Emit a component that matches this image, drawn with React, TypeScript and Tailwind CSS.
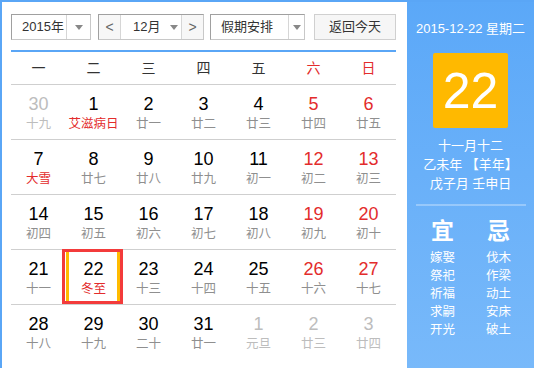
import React from "react";

type Day = { d: number; lunar: string; muted?: boolean; fest?: boolean };

const weeks: Day[][] = [
  [
    { d: 30, lunar: "十九", muted: true },
    { d: 1, lunar: "艾滋病日", fest: true },
    { d: 2, lunar: "廿一" },
    { d: 3, lunar: "廿二" },
    { d: 4, lunar: "廿三" },
    { d: 5, lunar: "廿四" },
    { d: 6, lunar: "廿五" },
  ],
  [
    { d: 7, lunar: "大雪", fest: true },
    { d: 8, lunar: "廿七" },
    { d: 9, lunar: "廿八" },
    { d: 10, lunar: "廿九" },
    { d: 11, lunar: "初一" },
    { d: 12, lunar: "初二" },
    { d: 13, lunar: "初三" },
  ],
  [
    { d: 14, lunar: "初四" },
    { d: 15, lunar: "初五" },
    { d: 16, lunar: "初六" },
    { d: 17, lunar: "初七" },
    { d: 18, lunar: "初八" },
    { d: 19, lunar: "初九" },
    { d: 20, lunar: "初十" },
  ],
  [
    { d: 21, lunar: "十一" },
    { d: 22, lunar: "冬至", fest: true },
    { d: 23, lunar: "十三" },
    { d: 24, lunar: "十四" },
    { d: 25, lunar: "十五" },
    { d: 26, lunar: "十六" },
    { d: 27, lunar: "十七" },
  ],
  [
    { d: 28, lunar: "十八" },
    { d: 29, lunar: "十九" },
    { d: 30, lunar: "二十" },
    { d: 31, lunar: "廿一" },
    { d: 1, lunar: "元旦", muted: true },
    { d: 2, lunar: "廿三", muted: true },
    { d: 3, lunar: "廿四", muted: true },
  ],
];

const weekdays = ["一", "二", "三", "四", "五", "六", "日"];
const yi = ["嫁娶", "祭祀", "祈福", "求嗣", "开光"];
const ji = ["伐木", "作梁", "动土", "安床", "破土"];

const font = "font-['Liberation_Sans','Noto_Sans_CJK_SC',sans-serif]";

function Caret() {
  return <span className="block w-0 h-0 border-x-[4px] border-x-transparent border-t-[5px] border-t-[#888]" />;
}

export default function App() {
  return (
    <div className={`w-[534px] h-[368px] overflow-hidden bg-white flex border-l-2 border-t-2 border-[#5aa6f6] ${font}`}>
      {/* Calendar */}
      <div className="w-[405px] shrink-0 pl-[9px] pt-3">
        {/* Controls */}
        <div className="flex items-center h-[26px] text-[13px] text-[#333]">
          <div className="flex h-full w-[80px] border border-[#c8c8c8] border-t-[#a0a0a0] border-l-[#a0a0a0]">
            <span className="flex-1 flex items-center pl-[10px]">2015年</span>
            <span className="w-[24px] border-l border-[#d6d6d6] flex items-center justify-center"><Caret /></span>
          </div>
          <div className="flex h-full w-[106px] ml-[7px] border border-[#c8c8c8] border-t-[#a0a0a0] border-l-[#a0a0a0]">
            <span className="w-[22px] border-r border-[#d6d6d6] bg-[#f7f7f7] flex items-center justify-center text-[#666] text-[14px]">&lt;</span>
            <span className="flex-1 flex items-center pl-[12px] gap-[10px]">12月<Caret /></span>
            <span className="w-[22px] border-l border-[#d6d6d6] bg-[#f7f7f7] flex items-center justify-center text-[#666] text-[14px]">&gt;</span>
          </div>
          <div className="flex h-full w-[95px] ml-[6px] border border-[#c8c8c8] border-t-[#a0a0a0] border-l-[#a0a0a0]">
            <span className="flex-1 flex items-center pl-[10px]">假期安排</span>
            <span className="w-[16px] border-l border-[#d6d6d6] flex items-center justify-center"><Caret /></span>
          </div>
          <button className="h-full w-[82px] ml-[9px] border border-[#d0d0d0] bg-[#f6f6f6] text-[13px] text-[#333]">返回今天</button>
        </div>

        <div className="w-[385px] mt-[10px] border-t-2 border-[#5aa6f6]" />

        {/* Weekday header */}
        <div className="w-[385px] grid grid-cols-7 h-[33px] items-center border-b border-[#cfcfcf] text-[14px]">
          {weekdays.map((w, i) => (
            <span key={w} className={`text-center ${i >= 5 ? "text-[#e32c2c]" : "text-[#333]"}`}>{w}</span>
          ))}
        </div>

        {/* Days */}
        {weeks.map((week, r) => (
          <div key={r} className={`w-[385px] grid grid-cols-7 h-[55px] ${r < 4 ? "border-b border-[#cfcfcf]" : ""}`}>
            {week.map((day, c) => {
              const today = r === 3 && c === 1;
              const weekend = c >= 5;
              const numColor = day.muted ? "text-[#bdbdbd]" : weekend ? "text-[#e32c2c]" : "text-black";
              const lunarColor = day.muted ? "text-[#bdbdbd]" : day.fest ? "text-[#e32c2c]" : "text-[#8f8f8f]";
              return (
                <div key={c} className="relative flex flex-col items-center pt-[8px]">
                  {today && (
                    <>
                      <span className="absolute inset-y-0 left-0 right-[1px] border-x-[3px] border-[#ffbb00]" />
                      <span className="absolute top-[-1px] bottom-[0px] left-[-4px] right-[-2px] border-[3px] border-[#f33b3b]" />
                    </>
                  )}
                  <span className={`text-[18px] leading-[22px] ${numColor}`}>{day.d}</span>
                  <span className={`text-[12.5px] leading-[16px] mt-[1px] ${lunarColor}`}>{day.lunar}</span>
                </div>
              );
            })}
          </div>
        ))}
      </div>

      {/* Side panel */}
      <div className="flex-1 -mt-[2px] bg-gradient-to-b from-[#5ba8f8] to-[#78b9fa] text-white flex flex-col items-center">
        <div className="mt-[20px] text-[13px] leading-[18px]">2015-12-22 星期二</div>
        <div className="mt-[15px] w-[75px] h-[75px] rounded-[2px] bg-[#ffb900] flex items-center justify-center text-[50px] leading-none">22</div>
        <div className="mt-[8px] text-[13px] leading-[19px] text-center">
          <div>十一月十二</div>
          <div>乙未年 【羊年】</div>
          <div>戊子月 壬申日</div>
        </div>
        <div className="mt-[11px] w-[110px] border-t-2 border-white/30" />
        <div className="mt-[11px] w-[112px] grid grid-cols-2 text-center">
          <div className="text-[23px] leading-[28px] font-bold">宜</div>
          <div className="text-[23px] leading-[28px] font-bold">忌</div>
          <div className="mt-[4px] text-[12.5px] leading-[18px] flex flex-col">
            {yi.map((t) => <span key={t}>{t}</span>)}
          </div>
          <div className="mt-[4px] text-[12.5px] leading-[18px] flex flex-col">
            {ji.map((t) => <span key={t}>{t}</span>)}
          </div>
        </div>
      </div>
    </div>
  );
}
